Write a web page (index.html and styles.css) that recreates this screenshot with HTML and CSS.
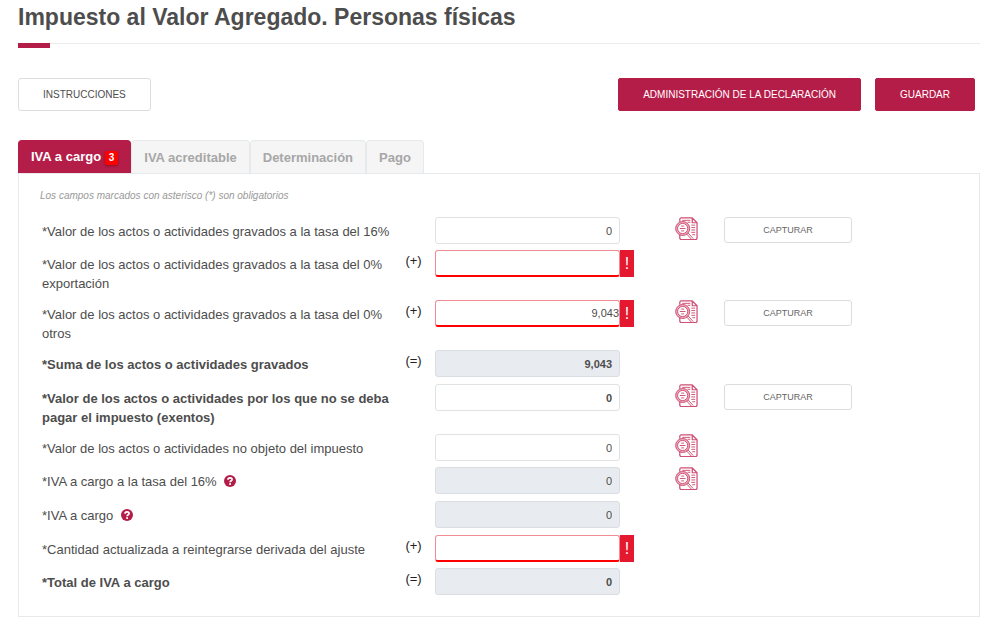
FILE: index.html
```html
<!DOCTYPE html>
<html lang="es">
<head>
<meta charset="utf-8">
<meta name="viewport" content="width=device-width, initial-scale=1">
<title>Impuesto al Valor Agregado</title>
<link rel="stylesheet" href="styles.css">
</head>
<body>
<svg class="sprite" aria-hidden="true">
  <symbol id="detail" viewBox="0 0 24 24">
    <g fill="none" stroke="currentColor" stroke-linejoin="round">
      <path stroke-width="1.300" d="M5 5V2.500Q5 1 6.500 1H18l5 5v16q0 1.500-1.500 1.500h-15Q5 23.500 5 22v-4M18 1v5h5"/>
      <path d="M7.500 3.500H16M13 5.500h3M17 8.500h4M17 11h4M17 13.500h4M17 16h4M18 18.500h3"/>
      <circle cx="8" cy="12" r="6.300" stroke-width="2.400" stroke-opacity=".45"/>
      <circle cx="8" cy="12" r="7.300"/>
      <circle cx="8" cy="12" r="5.300"/>
      <path d="M6.500 9.500h3M5 12h6M6.500 14.500h3M12 17.500l5 5.500M13.500 16.500l5.500 6"/>
    </g>
  </symbol>
  <symbol id="help" viewBox="0 0 12 12">
    <circle cx="6" cy="6" r="6" fill="currentColor"/>
    <path d="M4 4.700C4 2.300 8.100 2.300 8.100 4.500C8.100 5.800 6.100 5.700 6.100 7.300" fill="none" stroke="#fff" stroke-width="1.700"/>
    <rect x="5.200" y="8.200" width="1.800" height="1.700" fill="#fff"/>
  </symbol>
</svg>
<main class="page">
  <h1 class="title">Impuesto al Valor Agregado. Personas físicas</h1>
  <div class="toolbar">
    <button class="btn" type="button">INSTRUCCIONES</button>
    <div class="actions">
      <button class="btn btn-primary" type="button">ADMINISTRACIÓN DE LA DECLARACIÓN</button>
      <button class="btn btn-primary" type="button">GUARDAR</button>
    </div>
  </div>
  <div class="tabs" role="tablist">
    <button class="tab tab-active" type="button" role="tab" aria-selected="true">IVA a cargo <span class="count">3</span></button>
    <button class="tab" type="button" role="tab">IVA acreditable</button>
    <button class="tab" type="button" role="tab">Determinación</button>
    <button class="tab" type="button" role="tab">Pago</button>
  </div>
  <form class="panel">
    <p class="note">Los campos marcados con asterisco (*) son obligatorios</p>
    <div class="row">
      <label class="label" for="f1">*Valor de los actos o actividades gravados a la tasa del 16%</label>
      <span class="op"></span>
      <div class="field"><input class="input" id="f1" type="text" value="0"></div>
      <div class="detail"><button class="icon-btn" type="button" aria-label="Detalle"><svg class="icon"><use href="#detail"/></svg></button></div>
      <button class="capture" type="button">CAPTURAR</button>
    </div>
    <div class="row">
      <label class="label" for="f2">*Valor de los actos o actividades gravados a la tasa del 0% exportación</label>
      <span class="op">(+)</span>
      <div class="field"><input class="input input-error" id="f2" type="text"><span class="flag">!</span></div>
    </div>
    <div class="row">
      <label class="label" for="f3">*Valor de los actos o actividades gravados a la tasa del 0% <span class="tail">otros</span></label>
      <span class="op">(+)</span>
      <div class="field"><input class="input input-error" id="f3" type="text" value="9,043"><span class="flag">!</span></div>
      <div class="detail"><button class="icon-btn" type="button" aria-label="Detalle"><svg class="icon"><use href="#detail"/></svg></button></div>
      <button class="capture" type="button">CAPTURAR</button>
    </div>
    <div class="row row-computed row-strong">
      <label class="label" for="f4">*Suma de los actos o actividades gravados</label>
      <span class="op">(=)</span>
      <div class="field"><input class="input" id="f4" type="text" value="9,043" readonly></div>
    </div>
    <div class="row row-strong">
      <label class="label" for="f5">*Valor de los actos o actividades por los que no se deba <span class="tail">pagar el impuesto (exentos)</span></label>
      <span class="op"></span>
      <div class="field"><input class="input" id="f5" type="text" value="0"></div>
      <div class="detail"><button class="icon-btn" type="button" aria-label="Detalle"><svg class="icon"><use href="#detail"/></svg></button></div>
      <button class="capture" type="button">CAPTURAR</button>
    </div>
    <div class="row">
      <label class="label" for="f6">*Valor de los actos o actividades no objeto del impuesto</label>
      <span class="op"></span>
      <div class="field"><input class="input" id="f6" type="text" value="0"></div>
      <div class="detail"><button class="icon-btn" type="button" aria-label="Detalle"><svg class="icon"><use href="#detail"/></svg></button></div>
    </div>
    <div class="row row-computed">
      <label class="label" for="f7">*IVA a cargo a la tasa del 16% <svg class="help"><use href="#help"/></svg></label>
      <span class="op"></span>
      <div class="field"><input class="input" id="f7" type="text" value="0" readonly></div>
      <div class="detail"><button class="icon-btn" type="button" aria-label="Detalle"><svg class="icon"><use href="#detail"/></svg></button></div>
    </div>
    <div class="row row-computed">
      <label class="label" for="f8">*IVA a cargo <svg class="help"><use href="#help"/></svg></label>
      <span class="op"></span>
      <div class="field"><input class="input" id="f8" type="text" value="0" readonly></div>
    </div>
    <div class="row">
      <label class="label" for="f9">*Cantidad actualizada a reintegrarse derivada del ajuste</label>
      <span class="op">(+)</span>
      <div class="field"><input class="input input-error" id="f9" type="text"><span class="flag">!</span></div>
    </div>
    <div class="row row-computed row-strong">
      <label class="label" for="f10">*Total de IVA a cargo</label>
      <span class="op">(=)</span>
      <div class="field"><input class="input" id="f10" type="text" value="0" readonly></div>
    </div>
  </form>
</main>
</body>
</html>
```
FILE: styles.css
```css
* { box-sizing: border-box; }
body {
  margin: 0;
  background: #fff;
  color: #4d4d4d;
  font-family: "Liberation Sans", Arial, sans-serif;
  font-size: 13px;
}
button, input { font-family: inherit; }
button { cursor: pointer; }
.sprite { display: none; }
.page { padding: 3px 20px 12px 18px; }
.title {
  position: relative;
  margin: 0;
  padding-bottom: 12px;
  border-bottom: 1px solid #ececec;
  font-size: 23px;
  line-height: 28px;
}
.title::after {
  content: "";
  position: absolute;
  top: 100%;
  left: 0;
  width: 32px;
  height: 5px;
  background: #b51d49;
}
.toolbar {
  display: flex;
  justify-content: space-between;
  padding: 34px 5px 29px 0;
}
.actions { display: flex; gap: 14px; }
.btn {
  height: 33px;
  padding: 0 24px;
  border: 1px solid #ddd;
  border-radius: 3px;
  background: #fff;
  color: #4d4d4d;
  font-size: 10px;
}
.btn-primary { border-color: #b51d49; border-radius: 2px; background: #b51d49; color: #fff; }
.tabs { display: flex; }
.tab {
  height: 33px;
  padding: 0 12px;
  border: 1px solid #e7eaec;
  border-bottom: 0;
  border-radius: 4px 4px 0 0;
  background: #f5f5f5;
  color: #a7a7a7;
  font-size: 13px;
  font-weight: 700;
}
.tab-active { border-color: #b51d49; background: #b51d49; color: #fff; }
.count {
  display: inline-block;
  padding: 0 4px;
  border-radius: 2px;
  background: #f00;
  box-shadow: 0 1px 3px #6008;
  font-size: 10px;
  line-height: 14px;
}
.panel { padding: 14px 21px 14px 23px; border: 1px solid #e7eaec; }
.note { margin: 0 0 14px -2px; color: #999; font-size: 10px; font-style: italic; line-height: 15px; }
.row {
  display: grid;
  grid-template-columns:
    minmax(0, 350fr) minmax(0, 43fr) minmax(0, 185fr)
    minmax(0, 104fr) minmax(0, 128fr) minmax(0, 106fr);
  align-items: start;
  padding-bottom: 6px;
}
.row-computed { padding-bottom: 7px; }
.label { padding: 5px 0 1px; line-height: 19px; }
.tail { display: block; }
.row-strong .label, .row-strong .input { font-weight: 700; }
.op { color: #222; text-align: center; line-height: 21px; }
.field { position: relative; }
.input {
  display: block;
  width: 100%;
  height: 27px;
  padding: 0 7px;
  border: 1px solid #dfe3e6;
  border-radius: 3px;
  background: #fff;
  color: #4d4d4d;
  font-size: 11px;
  text-align: right;
}
.input[readonly] { border-color: #d8dee2; background: #e8ecf0; }
.input-error { padding-right: 0; border-color: #f08c94; border-bottom: 2px solid #f00; }
.flag {
  position: absolute;
  top: 0;
  left: 100%;
  width: 14px;
  background: #e4182f;
  color: #fff;
  font-size: 16px;
  line-height: 27px;
  text-align: center;
}
.detail { padding-left: 55px; }
.icon-btn { display: block; padding: 0; border: 0; background: none; color: #d04f74; }
.icon { display: block; width: 23px; height: 23px; }
.help { width: 12px; height: 12px; margin-left: 4px; color: #b51d49; vertical-align: -1px; }
.capture {
  height: 26px;
  padding: 0;
  border: 1px solid #ddd;
  border-radius: 3px;
  background: #fff;
  color: #666;
  font-size: 9px;
}
```
